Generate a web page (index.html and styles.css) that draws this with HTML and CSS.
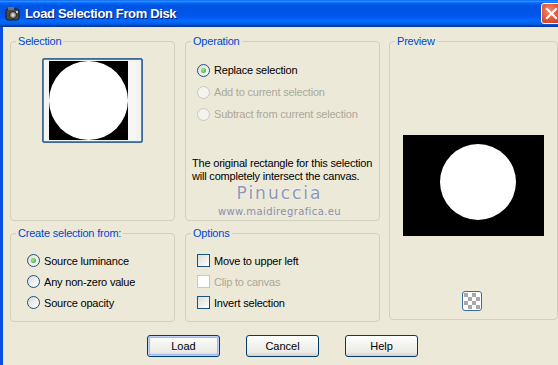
FILE: index.html
```html
<!DOCTYPE html>
<html>
<head>
    <title>Load Selection From Disk</title>
    <link rel="stylesheet" href="styles.css">
</head>
<body>
    <div class="window">
        <div class="titlebar">
            <svg class="app-icon" width="16" height="16" viewBox="0 0 16 16">
                <rect x="1" y="3" width="13" height="11" rx="2" fill="#4a4a4a" stroke="#1a1a1a"/>
                <rect x="3" y="1" width="6" height="3" fill="#707070"/>
                <circle cx="8" cy="9" r="3.5" fill="#9a9a9a" stroke="#222"/>
                <circle cx="8" cy="9" r="1.5" fill="#d8d8d8"/>
                <rect x="11" y="5" width="2" height="2" fill="#c8c8c8"/>
            </svg>
            <span class="title">Load Selection From Disk</span>
            <div class="close-btn">
                <svg width="13" height="13" viewBox="0 0 13 13">
                    <path d="M2 2 L11 11 M11 2 L2 11" stroke="#fff" stroke-width="2.2" stroke-linecap="square"/>
                </svg>
            </div>
        </div>

        <div class="dialog">
            <div class="groups">
                <div class="group selection-group">
                    <div class="group-title">Selection</div>
                    <div class="thumb">
                        <svg width="99" height="83" viewBox="0 0 99 83">
                            <rect x="0.5" y="0.5" width="98" height="82" fill="none" stroke="#000" stroke-dasharray="1 1"/>
                            <rect x="6" y="2" width="79" height="79" fill="#000"/>
                            <rect x="85" y="2" width="8" height="79" fill="#f6f6f6"/>
                            <circle cx="45.5" cy="41.5" r="39.5" fill="#fff"/>
                        </svg>
                    </div>
                </div>

                <div class="group operation-group">
                    <div class="group-title">Operation</div>
                    <div class="option-list op-list">
                        <div class="option"><span class="radio checked"></span>Replace selection</div>
                        <div class="option disabled"><span class="radio"></span>Add to current selection</div>
                        <div class="option disabled"><span class="radio"></span>Subtract from current selection</div>
                    </div>
                    <p class="info">The original rectangle for this selection<br>will completely intersect the canvas.</p>
                    <div class="watermark">
                        <span class="wm-name">Pinuccia</span>
                        <span class="wm-site">www.maidiregrafica.eu</span>
                    </div>
                </div>

                <div class="group preview-group">
                    <div class="group-title">Preview</div>
                    <div class="preview">
                        <svg width="141" height="101" viewBox="0 0 141 101">
                            <rect width="141" height="101" fill="#000"/>
                            <circle cx="75" cy="47" r="38" fill="#fff"/>
                        </svg>
                    </div>
                    <div class="checker-btn">
                        <svg width="16" height="16" viewBox="0 0 16 16">
                            <rect width="16" height="16" fill="#fff"/>
                            <path d="M0 0h4v4H0zM8 0h4v4H8zM4 4h4v4H4zM12 4h4v4h-4zM0 8h4v4H0zM8 8h4v4H8zM4 12h4v4H4zM12 12h4v4h-4z" fill="#a8a8a8"/>
                        </svg>
                    </div>
                </div>

                <div class="group create-group">
                    <div class="group-title">Create selection from:</div>
                    <div class="option-list bottom-list">
                        <div class="option"><span class="radio checked"></span>Source luminance</div>
                        <div class="option"><span class="radio"></span>Any non-zero value</div>
                        <div class="option"><span class="radio"></span>Source opacity</div>
                    </div>
                </div>

                <div class="group options-group">
                    <div class="group-title">Options</div>
                    <div class="option-list bottom-list">
                        <div class="option"><span class="checkbox"></span>Move to upper left</div>
                        <div class="option disabled"><span class="checkbox"></span>Clip to canvas</div>
                        <div class="option"><span class="checkbox"></span>Invert selection</div>
                    </div>
                </div>
            </div>

            <div class="buttons">
                <button class="button default">Load</button>
                <button class="button">Cancel</button>
                <button class="button">Help</button>
            </div>
        </div>
    </div>
</body>
</html>
```

FILE: styles.css
```css
body {
    margin: 0;
    font-family: "Liberation Sans", Arial, sans-serif;
    font-size: 11px;
    letter-spacing: -0.2px;
    color: #000;
    background-color: #ece9d8;
    overflow: hidden;
}

.window {
    width: 558px;
    height: 365px;
    display: flex;
    flex-direction: column;
}

.titlebar {
    height: 27px;
    flex: 0 0 27px;
    display: flex;
    align-items: center;
    padding-left: 5px;
    background: linear-gradient(to bottom, #0058ee 0%, #3593ff 4%, #288eff 6%, #127dff 8%, #036ffc 10%, #0262ee 14%, #0057e5 20%, #0054e3 24%, #0055eb 56%, #005bf5 66%, #026afe 76%, #0062ef 86%, #0052d6 92%, #0040ab 96%, #003092 100%);
}

.app-icon {
    flex: 0 0 16px;
}

.title {
    margin-left: 4px;
    color: #fff;
    font-weight: bold;
    font-size: 13px;
    letter-spacing: -0.35px;
    text-shadow: 1px 1px 0 #0a1e6e;
    flex: 1;
}

.close-btn {
    width: 21px;
    height: 21px;
    box-sizing: border-box;
    margin-right: -4px;
    border: 1px solid #fff;
    border-radius: 3px;
    background: radial-gradient(circle at 40% 35%, #f08a6c 0%, #e2593a 50%, #c33a17 100%);
    display: flex;
    align-items: center;
    justify-content: center;
}

.dialog {
    flex: 1;
    border-left: 3px solid #0a4fe0;
    padding: 14px 0 0 7px;
}

.groups {
    display: grid;
    grid-template-columns: 165px 195px 168px;
    grid-template-rows: 180px 89px;
    column-gap: 10px;
    row-gap: 12px;
}

.preview-group {
    grid-column: 3;
    grid-row: 1 / span 2;
    margin-left: -1px;
    margin-bottom: 2px;
}

.group {
    border: 1px solid #d0d0bf;
    border-radius: 4px;
    display: flex;
    flex-direction: column;
    align-items: flex-start;
}

.group-title {
    margin: -7px 0 0 5px;
    padding: 0 2px;
    line-height: 13px;
    color: #0046d5;
    background-color: #ece9d8;
}

.thumb {
    align-self: center;
    margin-top: 10px;
    width: 101px;
    height: 85px;
    box-sizing: border-box;
    border: 1px solid #3c6a9c;
    border-radius: 2px;
    background-color: #f4f3ee;
    display: flex;
    align-items: center;
    justify-content: center;
}

.thumb svg {
    display: block;
}

.option-list {
    display: flex;
    flex-direction: column;
}

.op-list {
    margin: 11px 0 0 11px;
}

.op-list .option {
    height: 22px;
}

.bottom-list {
    margin: 10px 0 0 11px;
}

.create-group .bottom-list {
    margin-left: 16px;
}

.bottom-list .option {
    height: 21px;
}

.option {
    display: flex;
    align-items: center;
    gap: 4px;
    white-space: nowrap;
}

.option.disabled {
    color: #aca899;
}

.radio {
    width: 13px;
    height: 13px;
    box-sizing: border-box;
    border: 1px solid #1c5180;
    border-radius: 50%;
    background: linear-gradient(135deg, #dcdcd7, #ffffff);
    display: flex;
    align-items: center;
    justify-content: center;
}

.radio.checked::after {
    content: "";
    width: 5px;
    height: 5px;
    border-radius: 50%;
    background: radial-gradient(circle at 40% 40%, #9cf08f, #21a121);
}

.disabled .radio {
    border-color: #cac8bb;
    background: #f4f3ee;
}

.checkbox {
    width: 13px;
    height: 13px;
    box-sizing: border-box;
    border: 1px solid #1c5180;
    background: linear-gradient(135deg, #dcdcd7, #ffffff);
}

.disabled .checkbox {
    border-color: #cac8bb;
    background: #fff;
}

.info {
    margin: 32px 0 0 6px;
    line-height: 13px;
    white-space: nowrap;
}

.watermark {
    align-self: center;
    display: flex;
    flex-direction: column;
    align-items: center;
    margin: 0 0 0 -6px;
    color: #8d97bd;
}

.wm-name {
    font-family: "DejaVu Sans", sans-serif;
    font-size: 17px;
    line-height: 20px;
    letter-spacing: 2px;
    text-shadow: 0 0 2px #fff;
}

.wm-site {
    font-family: "DejaVu Sans", sans-serif;
    font-size: 10px;
    line-height: 17px;
    letter-spacing: 0.4px;
    color: #8a8fae;
}

.preview {
    align-self: center;
    margin-top: 87px;
}

.preview svg {
    display: block;
}

.checker-btn {
    align-self: center;
    margin: 55px 3px 0 0;
    width: 20px;
    height: 20px;
    box-sizing: border-box;
    border: 1px solid #3c6a9c;
    border-radius: 3px;
    background-color: #fff;
    display: flex;
    align-items: center;
    justify-content: center;
}

.checker-btn svg {
    display: block;
}

.buttons {
    display: flex;
    gap: 26px;
    margin-top: 13px;
    padding-left: 137px;
}

.button {
    width: 73px;
    height: 22px;
    padding: 0;
    font-family: "Liberation Sans", Arial, sans-serif;
    font-size: 11px;
    color: #000;
    border: 1px solid #003c74;
    border-radius: 3px;
    background: linear-gradient(to bottom, #ffffff 0%, #f4f4f0 40%, #ecebe6 80%, #d6d0c5 100%);
}

.button.default {
    box-shadow: inset 0 0 0 1px #c1d3fb, inset 0 0 0 2px #a0b8f0;
}
```
